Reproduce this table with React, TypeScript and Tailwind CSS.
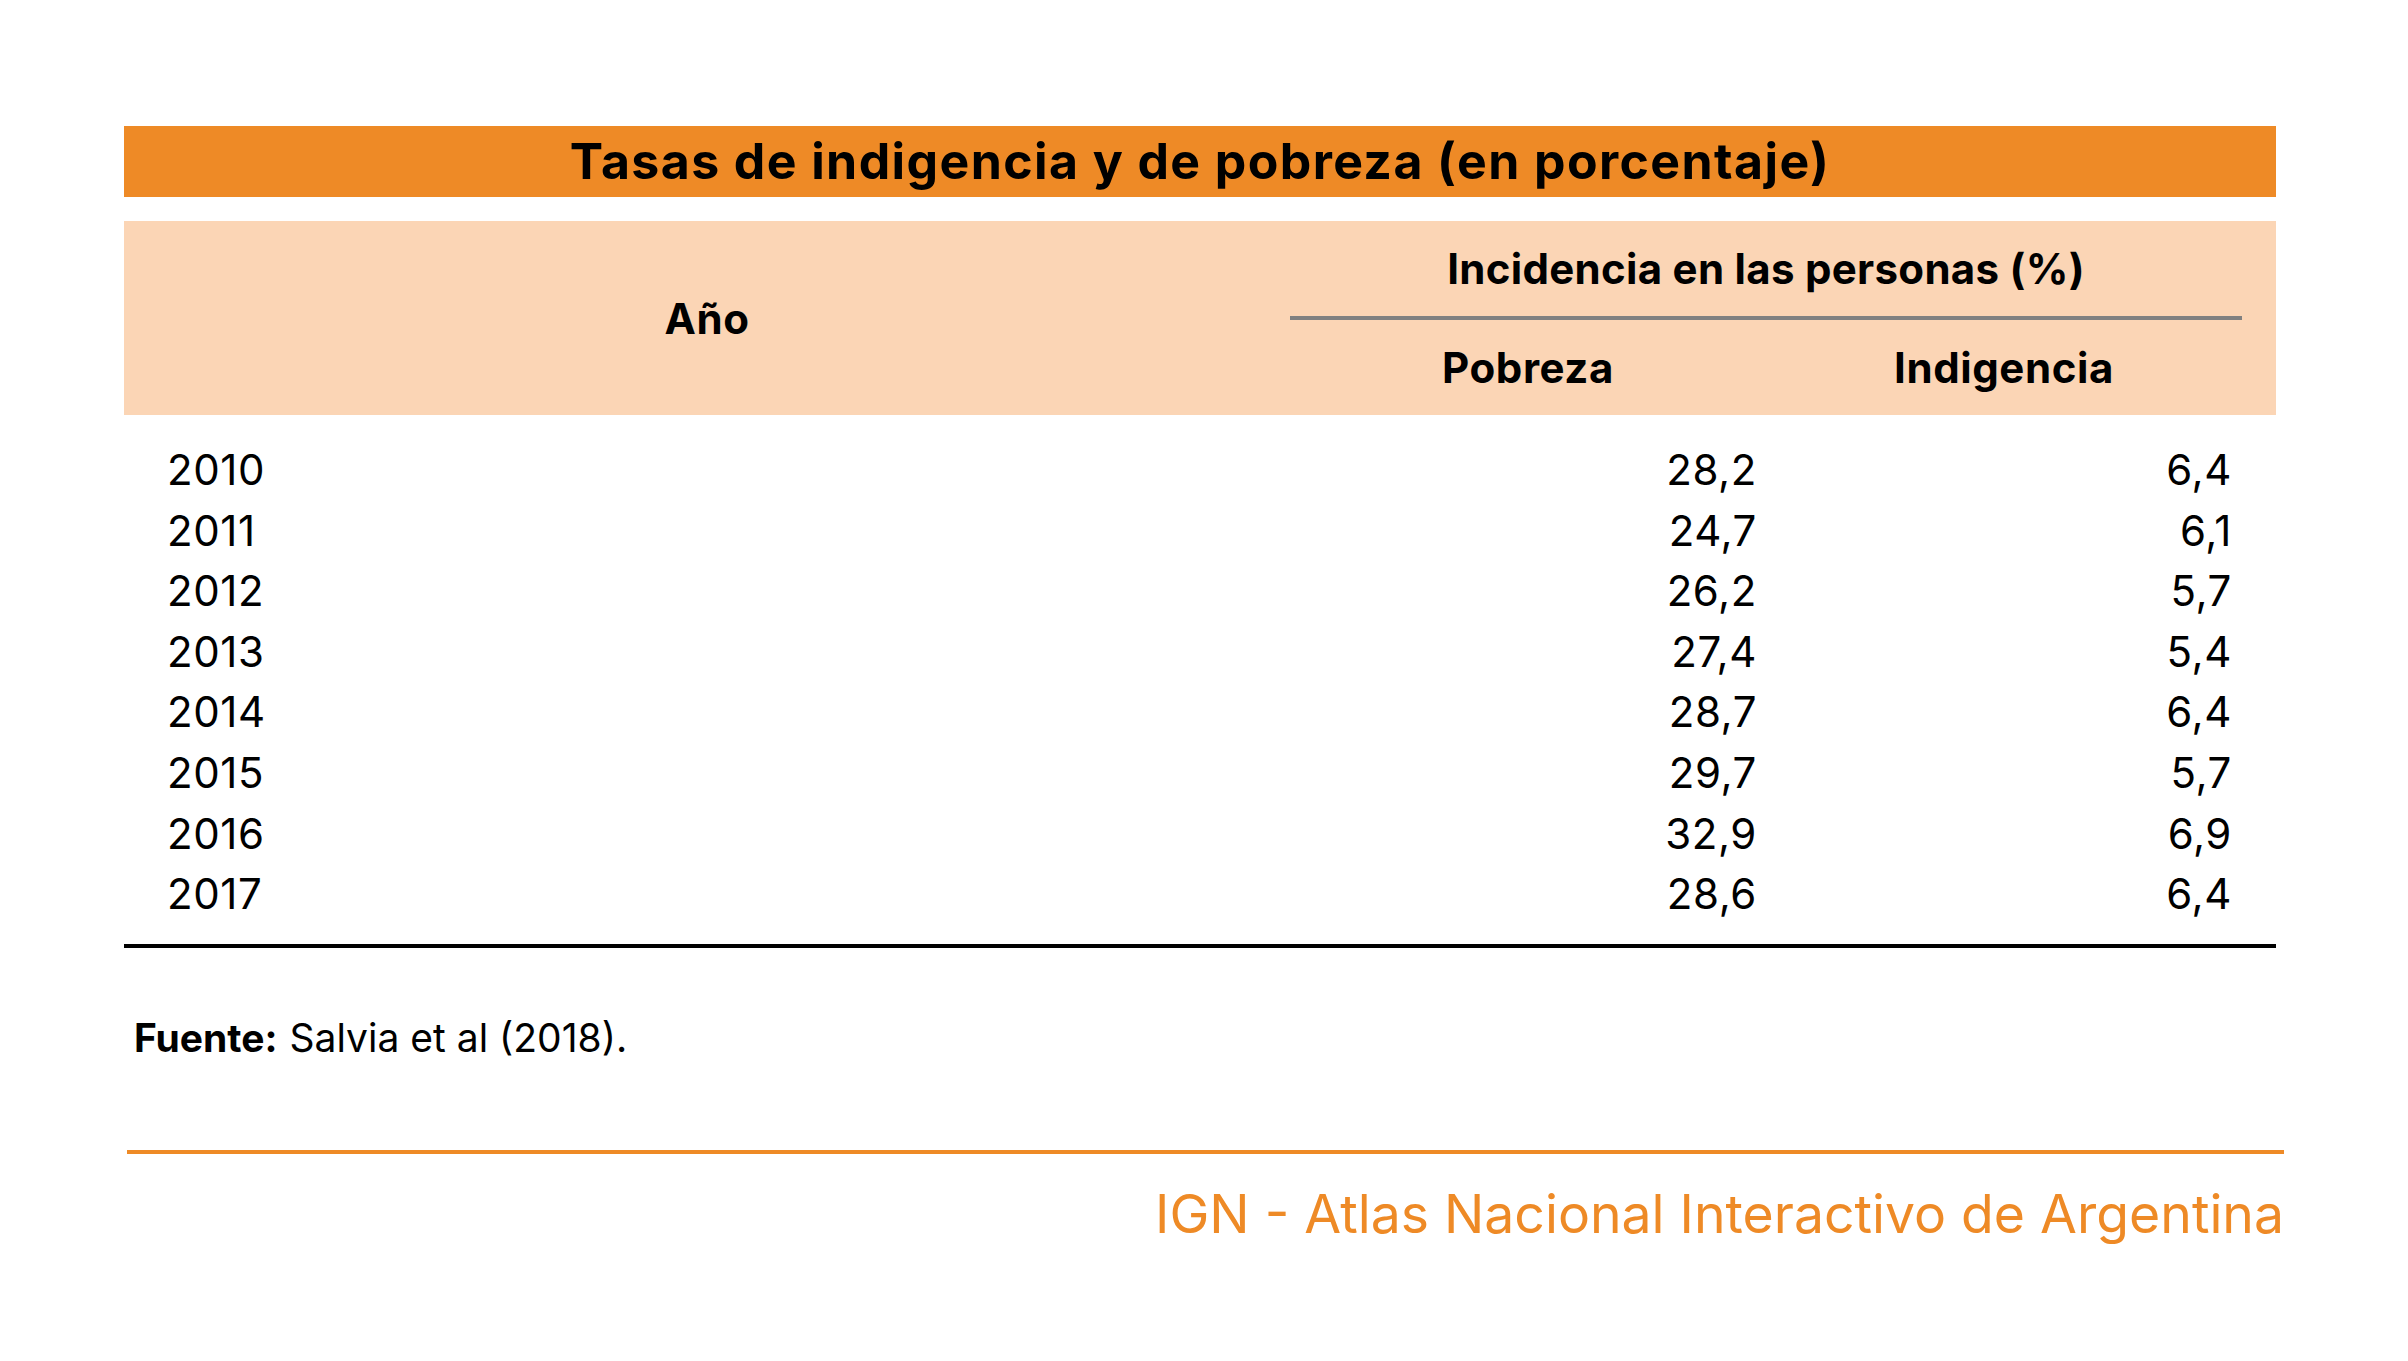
const rows = [
  { year: "2010", pobreza: "28,2", indigencia: "6,4" },
  { year: "2011", pobreza: "24,7", indigencia: "6,1" },
  { year: "2012", pobreza: "26,2", indigencia: "5,7" },
  { year: "2013", pobreza: "27,4", indigencia: "5,4" },
  { year: "2014", pobreza: "28,7", indigencia: "6,4" },
  { year: "2015", pobreza: "29,7", indigencia: "5,7" },
  { year: "2016", pobreza: "32,9", indigencia: "6,9" },
  { year: "2017", pobreza: "28,6", indigencia: "6,4" },
];

const fontClass = "font-['Inter','Liberation_Sans',sans-serif]";
const headCell = "flex items-center justify-center text-[42px] font-bold tracking-[0.6px]";

function TableHeader() {
  return (
    <div className="mt-[24px] grid h-[194px] grid-cols-[1166px_1fr] bg-[#fbd5b5] pr-[34px]">
      <div className={headCell}>Año</div>
      <div className="flex flex-col">
        <div className="flex h-[95px] items-center justify-center text-[42px] font-bold tracking-[0.3px]">
          Incidencia en las personas (%)
        </div>
        <div className="h-[4px] bg-[#808080]" />
        <div className="grid flex-1 grid-cols-2">
          <div className={headCell}>Pobreza</div>
          <div className={headCell}>Indigencia</div>
        </div>
      </div>
    </div>
  );
}

function DataRows() {
  return (
    <div className="pt-[23px] pb-[21px]">
      {rows.map((row) => (
        <div
          key={row.year}
          className="grid h-[60.6px] grid-cols-[1166px_476px_476px] items-center text-[42px] tracking-[0.6px] text-black">
          <div className="pl-[43px]">{row.year}</div>
          <div className="pr-[9px] text-right">{row.pobreza}</div>
          <div className="pr-[10px] text-right">{row.indigencia}</div>
        </div>
      ))}
    </div>
  );
}

export default function App() {
  return (
    <div className={`h-[1361px] w-[2408px] bg-white text-black ${fontClass}`}>
      <div className="ml-[124px] w-[2152px] pt-[126px]">
        <div className="flex h-[71px] items-center justify-center bg-[#ee8a26] text-[50px] font-bold tracking-[1.4px]">
          Tasas de indigencia y de pobreza (en porcentaje)
        </div>
        <TableHeader />
        <DataRows />
        <div className="h-[4px] bg-black" />
        <div className="mb-[22px] flex h-[180px] items-center pl-[10px] text-[39px]">
          <span className="font-bold">Fuente:</span>
          <span className="ml-[12px]">Salvia et al (2018).</span>
        </div>
      </div>
      <div className="ml-[127px] w-[2157px]">
        <div className="h-[4px] bg-[#ee8a26]" />
        <div className="flex h-[120px] items-center justify-end text-[53.5px] text-[#ee8a26]">
          IGN - Atlas Nacional Interactivo de Argentina
        </div>
      </div>
    </div>
  );
}
